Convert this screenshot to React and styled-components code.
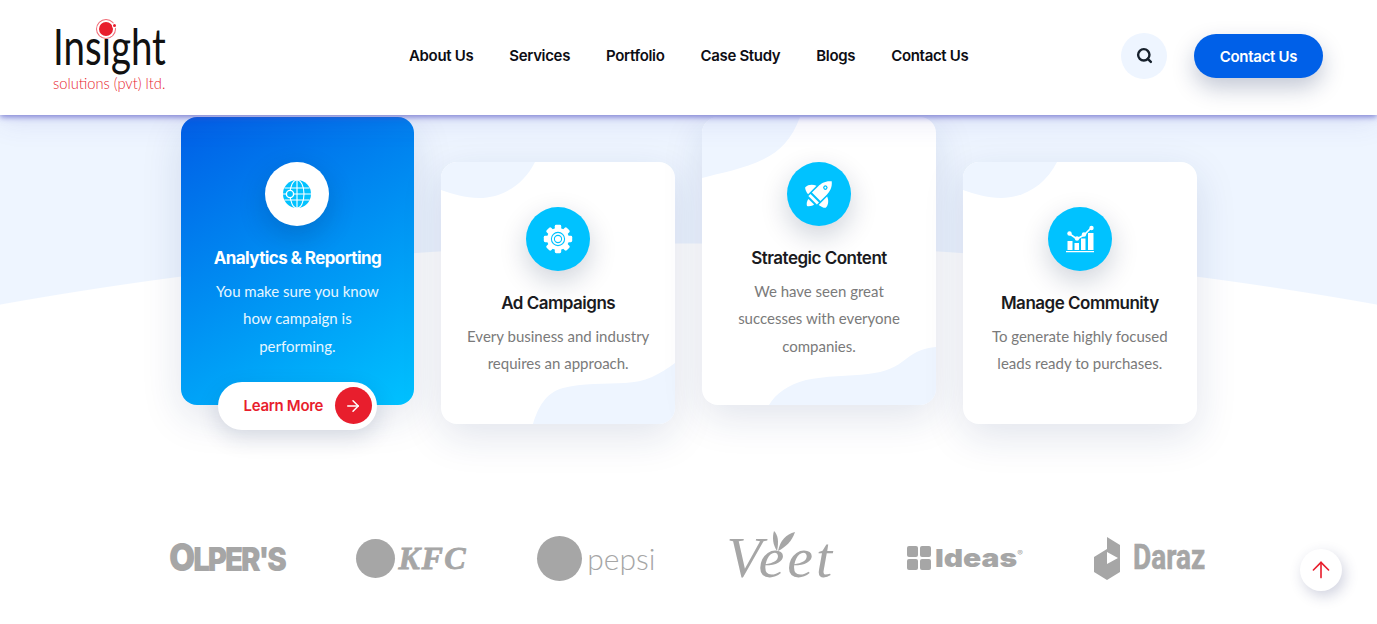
import styled, { createGlobalStyle } from "styled-components";
import { Search, ArrowRight, ArrowUp } from "lucide-react";

const navItems = ["About Us", "Services", "Portfolio", "Case Study", "Blogs", "Contact Us"];

const GlobeIcon = () => (
  <svg width="30" height="30" viewBox="0 0 30 30" fill="none">
    <circle cx="15" cy="15" r="14" fill="#00c2ff" />
    <g stroke="#fff" strokeWidth="1.1">
      <ellipse cx="15" cy="15" rx="7" ry="14" />
      <path d="M15 1v28M2.5 9h25M1 15h28M2.5 21h25" />
    </g>
    <circle cx="8" cy="15" r="3.6" fill="#00c2ff" stroke="#fff" strokeWidth="1.4" />
  </svg>
);

const GearIcon = () => (
  <svg width="30" height="30" viewBox="0 0 30 30" fill="none">
    {[0, 45, 90, 135, 180, 225, 270, 315].map((deg) => (
      <rect key={deg} x="11.8" y="0.8" width="6.4" height="6" rx="1.4" fill="#fff" transform={`rotate(${deg} 15 15)`} />
    ))}
    <circle cx="15" cy="15" r="11" fill="#fff" />
    <circle cx="15" cy="15" r="6.6" stroke="#00c2ff" strokeWidth="1.1" />
    <circle cx="15" cy="15" r="3.6" stroke="#00c2ff" strokeWidth="1.1" />
  </svg>
);

const RocketIcon = () => (
  <svg width="30" height="30" viewBox="0 0 30 30" fill="#fff">
    <g transform="rotate(45 15 15)">
      <path d="M15-3C20 1 21 6 21 10v9H9v-9C9 6 10 1 15-3Z" />
      <circle cx="15" cy="6" r="2.2" fill="#00c2ff" />
      <circle cx="15" cy="6" r="1" fill="#fff" />
      <path d="M9 21h12v3H9z" />
      <path d="M7.5 11v12c-3-.5-6-1.500-7-3 0-4 3-7.500 7-9ZM22.500 11v12c3-.5 6-1.500 7-3 0-4-3-7.500-7-9Z" />
      <path d="M11 26h8c0 2-2 5-4 6-2-1-4-4-4-6Z" />
    </g>
  </svg>
);

const ChartIcon = () => (
  <svg width="30" height="30" viewBox="0 0 30 30" fill="#fff">
    <path d="M1 27h28v1.300H1z" />
    <path d="M2.500 17h5v9h-5zM9.500 19h4.500v7H9.500zM16 14.500h4.500V26H16zM23 9h5.500v17H23z" />
    <path d="M4 9.500l8 5.500 7-4 7-7" fill="none" stroke="#fff" strokeWidth="1.600" />
    <circle cx="4.500" cy="9.500" r="2.200" />
    <circle cx="12" cy="14.500" r="2.200" />
    <circle cx="19" cy="10.500" r="2.200" />
    <circle cx="26.500" cy="4" r="2.200" />
  </svg>
);

const TopBlobA = () => (
  <BlobSvg $top width="234" height="40" viewBox="0 0 234 40">
    <path d="M0 0H94C82 24 60 36 38 36 24 36 12 32 0 28Z" fill="#eef5ff" />
  </BlobSvg>
);

const TopBlobB = () => (
  <BlobSvg $top width="234" height="62" viewBox="0 0 234 62">
    <path d="M0 0H98C90 22 78 34 62 42 42 52 18 56 0 61Z" fill="#eef5ff" />
  </BlobSvg>
);

const BottomBlobA = () => (
  <BlobSvg width="234" height="62" viewBox="0 0 234 62">
    <path d="M234 1C218 13 204 20 184 21 166 22 140 21 122 26 104 31 97 46 92 62H234Z" fill="#eef5ff" />
  </BlobSvg>
);

const BottomBlobB = () => (
  <BlobSvg width="234" height="60" viewBox="0 0 234 60">
    <path d="M234 2C222 3 214 6 204 14 194 22 184 27 166 29 148 31 122 31 104 35 86 40 74 48 67 60H234Z" fill="#eef5ff" />
  </BlobSvg>
);

const services = [
  {
    title: "Analytics & Reporting",
    lines: ["You make sure you know", "how campaign is", "performing."],
    icon: <GlobeIcon />,
    featured: true,
  },
  {
    title: "Ad Campaigns",
    lines: ["Every business and industry", "requires an approach."],
    icon: <GearIcon />,
    lowered: true,
    blobs: [<TopBlobA key="t" />, <BottomBlobA key="b" />],
  },
  {
    title: "Strategic Content",
    lines: ["We have seen great", "successes with everyone", "companies."],
    icon: <RocketIcon />,
    blobs: [<TopBlobB key="t" />, <BottomBlobB key="b" />],
  },
  {
    title: "Manage Community",
    lines: ["To generate highly focused", "leads ready to purchases."],
    icon: <ChartIcon />,
    lowered: true,
    blobs: [<TopBlobA key="t" />],
  },
];

const App = () => {
  return (
    <>
      <GlobalStyle />
      <Header>
        <Logo>
          <LogoWord>Insight</LogoWord>
          <LogoDot />
          <LogoSub>solutions (pvt) ltd.</LogoSub>
        </Logo>
        <Nav>
          {navItems.map((item) => (
            <NavLink key={item}>{item}</NavLink>
          ))}
        </Nav>
        <HeaderActions>
          <SearchButton>
            <Search size={17} strokeWidth={3.4} color="#16202c" />
          </SearchButton>
          <ContactButton>Contact Us</ContactButton>
        </HeaderActions>
      </Header>

      <ServicesSection>
        <CardGrid>
          {services.map((service) => (
            <Card key={service.title} $featured={service.featured} $lowered={service.lowered}>
              {service.blobs}
              <IconCircle $featured={service.featured}>{service.icon}</IconCircle>
              <CardTitle $featured={service.featured}>{service.title}</CardTitle>
              <CardText $featured={service.featured}>
                {service.lines.map((line) => (
                  <span key={line}>{line}</span>
                ))}
              </CardText>
              {service.featured && (
                <LearnMore>
                  Learn More
                  <ArrowCircle>
                    <ArrowRight size={18} strokeWidth={2} />
                  </ArrowCircle>
                </LearnMore>
              )}
            </Card>
          ))}
        </CardGrid>
      </ServicesSection>

      <BrandRow>
        <Brand>
          <OlpersText>
            <OlpersO>O</OlpersO>LPER'S
          </OlpersText>
        </Brand>
        <Brand $gap={3}>
          <BrandDot $size={39} />
          <KfcText>KFC</KfcText>
        </Brand>
        <Brand>
          <BrandDot $size={45} />
          <PepsiText>pepsi</PepsiText>
        </Brand>
        <Brand>
          <VeetText>
            Veet
            <VeetLeaf width="24" height="22" viewBox="0 0 24 22" fill="#a6a6a6">
              <path d="M2 0C6 4 7 10 5 20 1 14 0 7 2 0Z" />
              <path d="M23 1C14 3 8 10 6 20 14 16 20 10 23 1Z" />
            </VeetLeaf>
          </VeetText>
        </Brand>
        <Brand $gap={4}>
          <IdeasMark>
            <i />
            <i />
            <i />
            <i />
          </IdeasMark>
          <IdeasText>
            Ideas<sup>®</sup>
          </IdeasText>
        </Brand>
        <Brand $gap={13}>
          <svg width="26" height="43" viewBox="0 0 26 43" fill="#a6a6a6">
            <path d="M13 0L26 8V35L13 43L0 35V20L13 12Z" />
            <path d="M13 15L24 21L13 27Z" fill="#fff" />
          </svg>
          <DarazText>Daraz</DarazText>
        </Brand>
      </BrandRow>

      <ScrollTop>
        <ArrowUp size={26} strokeWidth={1.5} />
      </ScrollTop>
    </>
  );
};

export default App;

const GlobalStyle = createGlobalStyle`
  html, body {
    margin: 0;
    height: 624px;
    overflow: hidden;
    background: #fff;
  }

  body {
    font-family: "Inter", "Noto Sans", sans-serif;
  }
`;

const Header = styled.header`
  position: relative;
  z-index: 5;
  display: flex;
  align-items: center;
  height: 115px;
  padding: 0 54px 4px 53px;
  box-sizing: border-box;
  background: #fff;
  box-shadow: 0 2px 6px rgba(70, 70, 190, 0.65), 0 8px 26px rgba(70, 70, 190, 0.1);
`;

const Logo = styled.div`
  position: relative;
  width: 356px;
  height: 73px;
  flex-shrink: 0;
`;

const LogoWord = styled.div`
  font-family: "Lato", sans-serif;
  font-weight: 400;
  font-size: 50px;
  line-height: 55px;
  color: #111;
  transform: scaleX(0.77);
  transform-origin: 0 50%;
`;

const LogoDot = styled.span`
  position: absolute;
  left: 46px;
  top: 3px;
  width: 14px;
  height: 14px;
  border-radius: 50%;
  background: #e81e2d;
  box-shadow: 0 0 0 2px #fff, 0 0 0 3px #f06a74;

  &::after {
    content: "";
    position: absolute;
    right: -3px;
    top: 2px;
    width: 3px;
    height: 3px;
    border-radius: 50%;
    background: #e81e2d;
    box-shadow: 0 0 0 1px #fff;
  }
`;

const LogoSub = styled.div`
  font-family: "Lato", sans-serif;
  font-weight: 300;
  font-size: 14.7px;
  line-height: 18px;
  color: #e81e2d;
`;

const Nav = styled.nav`
  display: flex;
  gap: 36px;
`;

const NavLink = styled.a`
  font-size: 15px;
  font-weight: 600;
  letter-spacing: -0.33px;
  color: #0d0d14;
`;

const HeaderActions = styled.div`
  display: flex;
  align-items: center;
  gap: 27px;
  margin-left: auto;
`;

const SearchButton = styled.div`
  display: flex;
  align-items: center;
  justify-content: center;
  width: 46px;
  height: 46px;
  border-radius: 50%;
  background: #eef5ff;
`;

const ContactButton = styled.button`
  width: 129px;
  height: 44px;
  margin-top: 1px;
  border: 0;
  border-radius: 22px;
  background: #0060e8;
  color: #fff;
  font-family: inherit;
  font-size: 15px;
  font-weight: 600;
  letter-spacing: -0.3px;
  box-shadow: 0 10px 22px rgba(20, 40, 90, 0.25);
`;

const ServicesSection = styled.section`
  padding-top: 2px;
  height: 395px;
  box-sizing: border-box;
  background: radial-gradient(circle 3910px at 688.5px 4038px, #fff calc(100% - 1px), #eef5ff 100%);
`;

const CardGrid = styled.div`
  display: grid;
  grid-template-columns: repeat(4, 233.8px);
  justify-content: center;
  align-items: start;
  column-gap: 27px;
  margin-left: 0.2px;
`;

const Card = styled.article`
  position: relative;
  display: flex;
  flex-direction: column;
  align-items: center;
  min-height: 262px;
  margin-top: ${(props) => (props.$lowered ? "45px" : "0")};
  padding: 45px 0;
  box-sizing: border-box;
  border-radius: 16px;
  overflow: ${(props) => (props.$featured ? "visible" : "hidden")};
  text-align: center;
  background: ${(props) =>
    props.$featured ? "linear-gradient(150deg, #005ee6 0%, #00c2ff 100%)" : "#fff"};
  box-shadow: 0 12px 40px rgba(20, 50, 110, 0.13);
`;

const BlobSvg = styled.svg`
  position: absolute;
  left: 0;
  ${(props) => (props.$top ? "top: 0;" : "bottom: 0;")}
`;

const IconCircle = styled.div`
  position: relative;
  display: flex;
  align-items: center;
  justify-content: center;
  width: 64px;
  height: 64px;
  border-radius: 50%;
  background: ${(props) => (props.$featured ? "#fff" : "#00c2ff")};
  box-shadow: 0 10px 28px rgba(10, 30, 70, 0.2);
`;

const CardTitle = styled.h3`
  position: relative;
  margin: 20px 0 8px;
  font-size: 17px;
  line-height: 24px;
  font-weight: ${(props) => (props.$featured ? 700 : 600)};
  letter-spacing: ${(props) => (props.$featured ? "-0.6px" : "-0.5px")};
  color: ${(props) => (props.$featured ? "#fff" : "#1a1a20")};
`;

const CardText = styled.p`
  position: relative;
  display: flex;
  flex-direction: column;
  margin: 0;
  font-family: "Lato", sans-serif;
  font-size: 15px;
  line-height: 27.3px;
  color: ${(props) => (props.$featured ? "#e6f6ff" : "#7a7a7a")};
`;

const LearnMore = styled.a`
  position: absolute;
  left: 37px;
  bottom: -25px;
  display: flex;
  align-items: center;
  justify-content: space-between;
  width: 159px;
  height: 48px;
  padding: 0 5px 0 26px;
  box-sizing: border-box;
  border-radius: 24px;
  background: #fff;
  color: #e81e2d;
  font-size: 15px;
  font-weight: 600;
  letter-spacing: -0.3px;
  box-shadow: 0 8px 22px rgba(20, 40, 90, 0.15);
`;

const ArrowCircle = styled.span`
  display: flex;
  align-items: center;
  justify-content: center;
  width: 37px;
  height: 37px;
  border-radius: 50%;
  background: #e81e2d;
  color: #fff;
`;

const BrandRow = styled.div`
  display: grid;
  grid-template-columns: repeat(6, 184.4px);
  justify-content: center;
  align-items: center;
  height: 84px;
  margin-top: 6px;
`;

const Brand = styled.div`
  display: flex;
  align-items: center;
  justify-content: center;
  gap: ${(props) => props.$gap ?? 5}px;
  color: #a6a6a6;
`;

const BrandDot = styled.span`
  width: ${(props) => props.$size}px;
  height: ${(props) => props.$size}px;
  border-radius: 50%;
  background: #a6a6a6;
`;

const OlpersText = styled.span`
  display: block;
  width: 118px;
  font-size: 33px;
  line-height: 40px;
  font-weight: 900;
  letter-spacing: -2.3px;
  white-space: nowrap;
  transform: scaleX(0.89);
  transform-origin: 0 50%;
`;

const OlpersO = styled.span`
  font-size: 38px;
`;

const KfcText = styled.span`
  font-family: "Liberation Serif", serif;
  font-style: italic;
  font-weight: 700;
  font-size: 32px;
  letter-spacing: 1.6px;
  -webkit-text-stroke: 0.8px #a6a6a6;
`;

const PepsiText = styled.span`
  font-family: "Lato", sans-serif;
  font-weight: 300;
  font-size: 30px;
  line-height: 40px;
`;

const VeetText = styled.span`
  position: relative;
  font-family: "Liberation Serif", serif;
  font-style: italic;
  font-size: 58px;
  line-height: 62px;
  letter-spacing: 3px;
`;

const VeetLeaf = styled.svg`
  position: absolute;
  left: 46px;
  top: 4px;
`;

const IdeasMark = styled.span`
  display: grid;
  grid-template-columns: repeat(2, 11px);
  gap: 2px;

  i {
    height: 11px;
    border-radius: 2px;
    background: #a6a6a6;
  }
`;

const IdeasText = styled.span`
  display: block;
  width: 89px;
  font-size: 25px;
  line-height: 30px;
  font-weight: 900;
  white-space: nowrap;
  transform: scaleX(1.2);
  transform-origin: 0 50%;

  sup {
    font-size: 7px;
    font-weight: 400;
    vertical-align: 11px;
    line-height: 0;
  }
`;

const DarazText = styled.span`
  display: block;
  width: 72px;
  font-family: "Roboto", sans-serif;
  font-weight: 700;
  font-size: 35px;
  line-height: 40px;
  -webkit-text-stroke: 0.6px #a6a6a6;
  transform: scaleX(0.8);
  transform-origin: 0 50%;
`;

const ScrollTop = styled.div`
  position: fixed;
  right: 35px;
  top: 549px;
  display: flex;
  align-items: center;
  justify-content: center;
  width: 42px;
  height: 42px;
  border-radius: 50%;
  background: #fff;
  color: #e81e2d;
  box-shadow: 3px 5px 14px rgba(40, 50, 110, 0.22);
`;
